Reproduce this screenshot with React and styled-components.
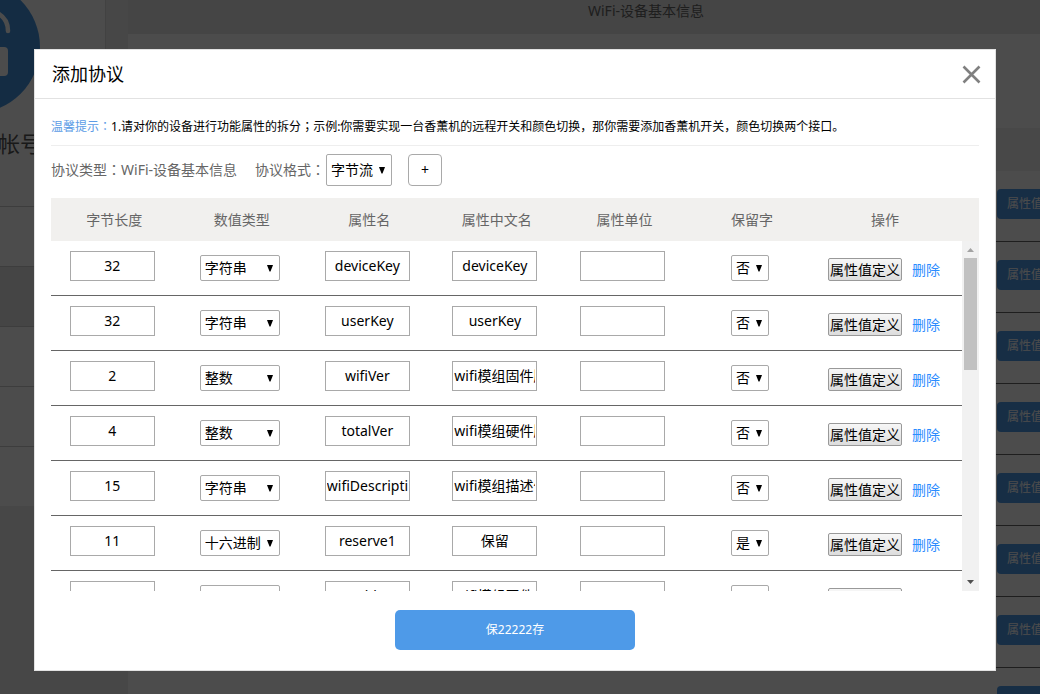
import React, { useState } from 'react';
import styled, { createGlobalStyle } from 'styled-components';

const GlobalStyle = createGlobalStyle`
  * {
    box-sizing: border-box;
  }

  body {
    margin: 0;
    overflow: hidden;
    background: #eee;
    color: #666;
    font-family: "Noto Sans", "Noto Sans CJK SC", sans-serif;
    font-size: 14px;
    line-height: 20px;
  }

  button, input, select {
    font: inherit;
    color: #000;
    margin: 0;
  }
`;

/* ---- page behind the dialog ---- */

const Page = styled.div`
  display: flex;
  align-items: flex-start;
  gap: 22px;
  min-width: 1164px;
  height: 100vh;
  overflow: hidden;
`;

const Sidebar = styled.aside`
  flex: none;
  width: 106px;
  overflow: hidden;
  background: #fff;
  border-right: 1px solid #ddd;
`;

const Avatar = styled.svg`
  display: block;
  width: 106px;
  height: 126px;
`;

const Account = styled.div`
  height: 80px;
  padding-top: 2px;
  font-size: 22px;
  line-height: 30px;
  text-indent: -2px;
  color: #555;
`;

const MenuItem = styled.div`
  height: 60px;
  border-top: 1px solid #ccc;
  background: ${props => (props.$active ? '#e6e6e6' : '#fff')};
`;

const Content = styled.main`
  flex: 1;
  min-height: 100%;
  background: #fff;
`;

const ContentTitle = styled.div`
  height: 34px;
  background: #e6e6e6;
  color: #666;
  line-height: 22px;
  text-align: center;
`;

const ContentHead = styled.div`
  height: 43px;
  margin-top: 94px;
  background: #f0f0f0;
`;

const ContentRow = styled.div`
  display: flex;
  justify-content: flex-end;
  height: 71px;
  padding: 18px 87px 0 0;
  border-bottom: 1px solid #666;
`;

const RowButton = styled.button`
  width: 80px;
  height: 30px;
  padding: 0;
  border: 0;
  border-radius: 4px;
  background: #4e9ae8;
  color: #fff;
  font-size: 12px;
`;

/* ---- dialog ---- */

const Overlay = styled.div`
  position: fixed;
  inset: 0;
  display: flex;
  align-items: flex-start;
  padding: 49px 44px 0 34px;
  background: rgba(0, 0, 0, 0.7);
`;

const Dialog = styled.div`
  flex: 1;
  min-width: 0;
  background: #fff;
  border: 1px solid #e2e2e2;
`;

const DialogHeader = styled.header`
  display: flex;
  align-items: center;
  justify-content: space-between;
  height: 49px;
  padding: 0 14px 0 17px;
  border-bottom: 1px solid #e2e2e2;
`;

const Title = styled.h2`
  margin: 0;
  color: #000;
  font-size: 18px;
  font-weight: normal;
`;

const CloseButton = styled.button`
  display: flex;
  padding: 0;
  border: 0;
  background: none;
  cursor: pointer;
`;

const DialogBody = styled.div`
  padding: 0 16px 20px;
`;

const Tip = styled.p`
  height: 47px;
  margin: 0;
  padding-top: 18px;
  border-bottom: 1px solid #eee;
  color: #000;
  font-size: 12px;
`;

const TipLabel = styled.span`
  color: #5c9ce6;
`;

/* the TC face centres full-width punctuation */
const Mark = styled.span`
  font-family: "Noto Sans CJK TC", sans-serif;
  line-height: 0;
`;

const Toolbar = styled.div`
  display: flex;
  align-items: center;
  gap: 16px;
  padding: 8px 0 12px;
`;

const Protocol = styled.span`
  margin-right: 2px;
`;

const Field = styled.label`
  display: flex;
  align-items: center;
  gap: 1px;
`;

const AddButton = styled.button`
  width: 34px;
  height: 32px;
  padding: 0;
  border: 1px solid #a9a9a9;
  border-radius: 4px;
  background: #fff;
  cursor: pointer;
`;

const SelectBox = styled.span`
  display: inline-grid;
  align-items: center;
  width: ${props => props.$width}px;
  height: ${props => props.$height}px;

  select, svg {
    grid-area: 1 / 1;
  }

  select {
    appearance: none;
    width: 100%;
    height: 100%;
    padding: 0 4px;
    border: 1px solid #a9a9a9;
    border-radius: 2px;
    background: #fff;
    line-height: 20px;
  }

  svg {
    justify-self: end;
    margin-right: 7px;
    pointer-events: none;
  }
`;

const TableWrap = styled.div`
  display: flex;
  background: #f1f0ee;
`;

const Table = styled.table`
  display: block;
  flex: 1;
  min-width: 0;
  border-collapse: collapse;

  thead {
    display: block;
  }

  tbody {
    display: block;
    height: 350px;
    overflow-y: auto;
    scrollbar-width: none;
    background: #fff;
  }

  tr {
    display: table;
    width: 100%;
    table-layout: fixed;
  }

  tbody tr {
    height: 55px;
    border-bottom: 1px solid #666;
  }
`;

const Th = styled.th`
  width: ${props => props.$width || '14%'};
  height: 43px;
  padding: 0 ${props => (props.$width ? 8 : 1)}px 0 0;
  font-weight: normal;
`;

const Td = styled.td`
  width: ${props => props.$width || '14%'};
  height: 54px;
  padding: ${props => props.$top}px ${props => (props.$width ? 10 : 5)}px 0 0;
  border-bottom: 1px solid #666;
  line-height: 0;
  text-align: center;
  vertical-align: top;
`;

const TextInput = styled.input`
  width: 85px;
  height: 30px;
  padding: 0 1px 2px;
  border: 1px solid #a9a9a9;
  border-radius: 0;
  background: #fff;
  line-height: 20px;
  text-align: center;
`;

const Actions = styled.div`
  display: flex;
  justify-content: center;
  align-items: center;
  gap: 10px;
  line-height: 20px;
  white-space: nowrap;
`;

const DefineButton = styled.button`
  height: 23px;
  padding: 0 1px;
  border: 1px solid #999;
  border-radius: 2px;
  background: linear-gradient(#f7f7f7, #dcdcdc);
  cursor: pointer;
`;

const DeleteLink = styled.a`
  color: #2b8cff;
  text-decoration: none;
`;

const Rail = styled.div`
  display: flex;
  flex-direction: column;
  align-items: center;
  width: 17px;
  margin-top: 43px;
  background: #f1f1f1;

  svg {
    flex: none;
  }
`;

const Thumb = styled.div`
  width: 13px;
  height: 112px;
  margin-bottom: auto;
  background: #c1c1c1;
`;

const SaveButton = styled.button`
  display: block;
  width: 240px;
  height: 40px;
  margin: 19px auto 0;
  border: 0;
  border-radius: 5px;
  background: #4e9ae8;
  color: #fff;
  font-size: 12px;
  cursor: pointer;
`;

const TYPES = ['字符串', '整数', '十六进制'];

const COLUMNS = ['字节长度', '数值类型', '属性名', '属性中文名', '属性单位', '保留字'];

const ROWS = [
  { length: '32', type: '字符串', name: 'deviceKey', label: 'deviceKey', reserved: '否' },
  { length: '32', type: '字符串', name: 'userKey', label: 'userKey', reserved: '否' },
  { length: '2', type: '整数', name: 'wifiVer', label: 'wifi模组固件版本', reserved: '否' },
  { length: '4', type: '整数', name: 'totalVer', label: 'wifi模组硬件版本', reserved: '否' },
  { length: '15', type: '字符串', name: 'wifiDescription', label: 'wifi模组描述信息', reserved: '否' },
  { length: '11', type: '十六进制', name: 'reserve1', label: '保留', reserved: '是' },
  { length: '4', type: '整数', name: 'addr', label: 'wifi模组固件长度', reserved: '否' },
];

const Select = ({ width, height, options, value, label }) => (
  <SelectBox $width={width} $height={height}>
    <select defaultValue={value} aria-label={label}>
      {options.map(option => <option key={option}>{option}</option>)}
    </select>
    <svg width="6" height="7" viewBox="0 0 6 7">
      <path d="M0 0h6L3.500 6.500h-1z" fill="#000" />
    </svg>
  </SelectBox>
);

const ProtocolRow = ({ row, onDelete }) => (
  <tr>
    <Td $top={10}><TextInput defaultValue={row.length} aria-label="字节长度" /></Td>
    <Td $top={14}>
      <Select width={80} height={26} options={TYPES} value={row.type} label="数值类型" />
    </Td>
    <Td $top={10}><TextInput defaultValue={row.name} aria-label="属性名" /></Td>
    <Td $top={10}><TextInput defaultValue={row.label} aria-label="属性中文名" /></Td>
    <Td $top={10}><TextInput aria-label="属性单位" /></Td>
    <Td $top={14}>
      <Select width={38} height={26} options={['否', '是']} value={row.reserved} label="保留字" />
    </Td>
    <Td $top={17} $width="16%">
      <Actions>
        <DefineButton type="button">属性值定义</DefineButton>
        <DeleteLink href="#" onClick={onDelete}>删除</DeleteLink>
      </Actions>
    </Td>
  </tr>
);

const Background = () => (
  <Page>
    <Sidebar>
      <Avatar viewBox="0 0 106 126">
        <circle cx="-26" cy="47" r="66" fill="#4595e0" />
        <path d="M-8 11C2 14 8 21 8 31" fill="none" stroke="#fff" strokeWidth="4.500" strokeLinecap="round" />
        <rect x="-60" y="47" width="68" height="29" rx="4" fill="#fff" />
      </Avatar>
      <Account>帐号</Account>
      <MenuItem />
      <MenuItem $active />
      <MenuItem />
      <MenuItem />
      <MenuItem />
    </Sidebar>
    <Content>
      <ContentTitle>WiFi-设备基本信息</ContentTitle>
      <ContentHead />
      {[1, 2, 3, 4, 5, 6, 7, 8].map(n => (
        <ContentRow key={n}>
          <RowButton type="button">属性值定义</RowButton>
        </ContentRow>
      ))}
    </Content>
  </Page>
);

const App = () => {
  const [rows, setRows] = useState(ROWS);

  const addRow = () => {
    setRows([...rows, { length: '', type: '整数', name: '', label: '', reserved: '否' }]);
  };

  const deleteRow = (event, row) => {
    event.preventDefault();
    setRows(rows.filter(item => item !== row));
  };

  return (
    <>
      <GlobalStyle />
      <Background />
      <Overlay>
        <Dialog role="dialog" aria-label="添加协议">
          <DialogHeader>
            <Title>添加协议</Title>
            <CloseButton type="button" aria-label="关闭">
              <svg width="19" height="19" viewBox="0 0 19 19">
                <path d="M1.500 1.500l16 16M17.500 1.500l-16 16" stroke="#808080" strokeWidth="2.600" />
              </svg>
            </CloseButton>
          </DialogHeader>
          <DialogBody>
            <Tip>
              <TipLabel>温馨提示<Mark>：</Mark></TipLabel>
              1.请对你的设备进行功能属性的拆分<Mark>；</Mark>示例:你需要实现一台香薰机的远程开关和颜色切换，那你需要添加香薰机开关，颜色切换两个接口。
            </Tip>
            <Toolbar>
              <Protocol>协议类型<Mark>：</Mark>WiFi-设备基本信息</Protocol>
              <Field>
                <span>协议格式<Mark>：</Mark></span>
                <Select width={66} height={32} options={['字节流', 'JSON']} value="字节流" label="协议格式" />
              </Field>
              <AddButton type="button" onClick={addRow}>+</AddButton>
            </Toolbar>
            <TableWrap>
              <Table>
                <thead>
                  <tr>
                    {COLUMNS.map(column => <Th key={column}>{column}</Th>)}
                    <Th $width="16%">操作</Th>
                  </tr>
                </thead>
                <tbody>
                  {rows.map((row, i) => (
                    <ProtocolRow key={i} row={row} onDelete={event => deleteRow(event, row)} />
                  ))}
                </tbody>
              </Table>
              <Rail>
                <svg width="17" height="17" viewBox="0 0 17 17">
                  <path d="M5 11l3.500-4 3.500 4z" fill="#a3a3a3" />
                </svg>
                <Thumb />
                <svg width="17" height="17" viewBox="0 0 17 17">
                  <path d="M5 6l3.500 4L12 6z" fill="#505050" />
                </svg>
              </Rail>
            </TableWrap>
            <SaveButton type="button">保22222存</SaveButton>
          </DialogBody>
        </Dialog>
      </Overlay>
    </>
  );
};

export default App;
